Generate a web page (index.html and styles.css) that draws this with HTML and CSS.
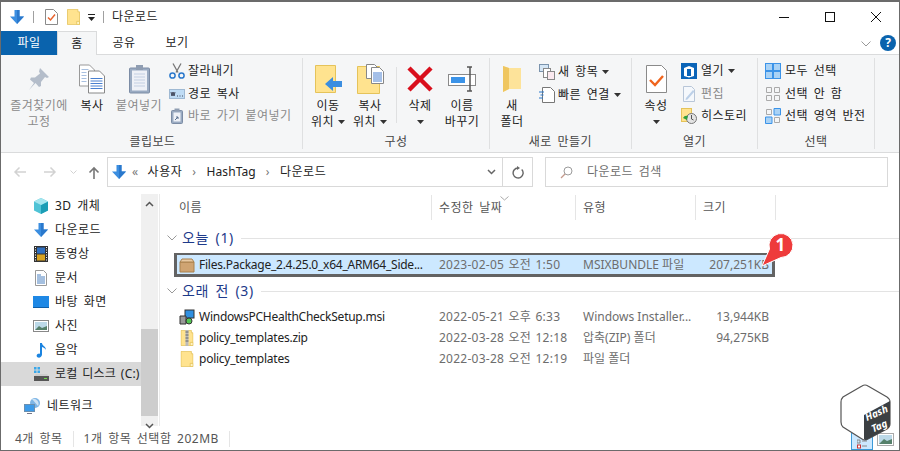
FILE: index.html
```html
<!DOCTYPE html>
<html lang="ko">
<head>
<meta charset="utf-8">
<title>다운로드</title>
<link rel="stylesheet" href="styles.css">
</head>
<body>
<svg class="defs" width="0" height="0">
  <symbol id="dl" viewBox="0 0 16 16"><path d="M5.500 1h5v6.500H15L8 15 1 7.500h4.500z" fill="#3b8ee0"/><path d="M8 1h2.500v6.500H15L8 15z" fill="#2a78cc"/></symbol>
  <symbol id="folder" viewBox="0 0 16 20"><path d="M.5.500h13v3h2v16H.5z" fill="#ffe38f" stroke="#e5c35a"/><path d="M12 15.500h3.500v4H12z" fill="#fff3c4" stroke="#e5c35a"/></symbol>
  <symbol id="caret" viewBox="0 0 7 4"><path d="M0 0h7L3.500 4z" fill="#333"/></symbol>
  <symbol id="chev" viewBox="0 0 10 6"><path d="M.5.500 5 5 9.500.5" fill="none" stroke="#999"/></symbol>
</svg>
<div class="window">

  <header class="titlebar">
    <svg class="qa-dl" width="16" height="16"><use href="#dl"/></svg>
    <i class="qa-sep"></i>
    <svg class="qa-props" width="13" height="16" viewBox="0 0 13 16"><path d="M.5.500h8l4 4v11H.5z" fill="#fff" stroke="#8a8a8a"/><path d="M3 8.500l2.500 2.500L10 5.500" fill="none" stroke="#e8622c" stroke-width="1.500"/></svg>
    <svg class="qa-folder" width="13" height="16"><use href="#folder"/></svg>
    <svg class="qa-more" width="7" height="7" viewBox="0 0 7 7"><path d="M0 0h7v1H0zM0 3h7L3.500 7z" fill="#222"/></svg>
    <i class="qa-sep qa-sep-2"></i>
    <span class="title">다운로드</span>
    <div class="winctl">
      <svg width="12" height="12" viewBox="0 0 12 12"><path d="M1 6.500h10" stroke="#111"/></svg>
      <svg width="12" height="12" viewBox="0 0 12 12"><rect x="1.500" y="1.500" width="9" height="9" fill="none" stroke="#111"/></svg>
      <svg width="12" height="12" viewBox="0 0 12 12"><path d="M1 1l10 10M11 1 1 11" stroke="#111"/></svg>
    </div>
  </header>

  <nav class="tabs">
    <span class="tab tab-file">파일</span>
    <span class="tab tab-on">홈</span>
    <span class="tab tab-share">공유</span>
    <span class="tab tab-view">보기</span>
    <svg class="collapse" width="10" height="6"><use href="#chev"/></svg>
    <span class="help">?</span>
  </nav>

  <section class="ribbon">
    <div class="group g-clip">
      <div class="tools">
        <div class="lg lg-pin off">
          <svg width="24" height="24" viewBox="0 0 24 24"><path d="M13 1l9 9-2 1-2-1-4 5 0 4-2 1-3.500-4L2 23l5-7-4-3.500 1-2h4l5-4-1-2z" fill="#b4bdca"/></svg>
          <span>즐겨찾기에<br>고정</span>
        </div>
        <div class="lg lg-copy">
          <svg width="26" height="29" viewBox="0 0 26 29"><path d="M.5.500h10l5 5v16H.5z" fill="#fff" stroke="#999"/><path d="M9.500 6.500h11l5 5v17h-16z" fill="#fff" stroke="#888"/><path d="M2.500 5h7M2.500 8h5M2.500 11h5M2.500 14h5M2.500 17h5" stroke="#a8c0e0"/><path d="M11.500 14h12M11.500 16.500h12M11.500 19h12M11.500 21.500h12M11.500 24h12" stroke="#4a80d0"/></svg>
          <span>복사</span>
        </div>
        <div class="lg lg-paste off">
          <svg width="21" height="29" viewBox="0 0 21 29"><rect x=".5" y="3.500" width="20" height="25" rx="1" fill="#9aabc2" stroke="#7c8ca5"/><rect x="3" y="6" width="15" height="20" fill="#eef1f7"/><path d="M5 9.500h11M5 12.500h11M5 15.500h11M5 18.500h11M5 21.500h11" stroke="#c3cfe2"/><rect x="7" y=".5" width="7" height="5" fill="#8f9db2"/></svg>
          <span>붙여넣기</span>
        </div>
        <div class="smalls">
          <div class="sm">
            <svg width="16" height="16" viewBox="0 0 16 16"><path d="M4 .5l5 9M12 .5l-5 9" stroke="#777" stroke-width="1.300"/><circle cx="3.500" cy="12.500" r="2.600" fill="none" stroke="#2a78cc" stroke-width="1.500"/><circle cx="12.500" cy="12.500" r="2.600" fill="none" stroke="#2a78cc" stroke-width="1.500"/></svg>
            <span>잘라내기</span>
          </div>
          <div class="sm">
            <svg width="16" height="16" viewBox="0 0 16 16"><rect x=".5" y="3.500" width="15" height="9" fill="#bfdcf5" stroke="#9fb9d3"/><path d="M2 6l1 4 1-4 1 4 1-4M8 10h1M10.500 10h1M13 10h1" stroke="#223" fill="none" stroke-width=".8"/></svg>
            <span>경로 복사</span>
          </div>
          <div class="sm off">
            <svg width="16" height="16" viewBox="0 0 16 16"><rect x="2.500" y="2.500" width="11" height="13" rx="1" fill="#9aabc2" stroke="#7c8ca5"/><rect x="4.500" y="4.500" width="7" height="9" fill="#eef1f7"/><rect x="5.500" y=".5" width="5" height="3" fill="#8f9db2"/><path d="M6 12l3-3m-2 0h2v2" fill="none" stroke="#5a7090"/></svg>
            <span>바로 가기 붙여넣기</span>
          </div>
        </div>
      </div>
      <div class="gname">클립보드</div>
    </div>

    <div class="group g-org">
      <div class="tools">
        <div class="lg lg-42">
          <svg width="27" height="28" viewBox="0 0 27 28"><path d="M.5.500h20v27H.5z" fill="#ffe38f" stroke="#e5c35a"/><path d="M10 19l8-7v4h9v6h-9v4z" fill="#3b8ee0"/></svg>
          <span>이동<br>위치<svg class="cr" width="7" height="4"><use href="#caret"/></svg></span>
        </div>
        <div class="lg lg-42">
          <svg width="27" height="30" viewBox="0 0 27 30"><path d="M.5 2.500h22v27H.5z" fill="#ffe38f" stroke="#e5c35a"/><path d="M9.500.5h8l4 4v10h-12z" fill="#fff" stroke="#888"/><path d="M14.500 3.500h8l4 4v12h-12z" fill="#fff" stroke="#888"/><path d="M16 9h9M16 11h9M16 13h9M16 15h9M16 17h9" stroke="#4a80d0"/></svg>
          <span>복사<br>위치<svg class="cr" width="7" height="4"><use href="#caret"/></svg></span>
        </div>
        <i class="vsep"></i>
        <div class="lg lg-del">
          <svg width="26" height="26" viewBox="0 0 26 26"><path d="M2 2l22 22M24 2 2 24" stroke="#d90f1c" stroke-width="4.500"/></svg>
          <span>삭제<br><svg class="cr solo" width="7" height="4"><use href="#caret"/></svg></span>
        </div>
        <div class="lg lg-ren">
          <svg width="28" height="26" viewBox="0 0 28 26"><rect x=".5" y="8.500" width="27" height="11" fill="#fff" stroke="#8a8a8a"/><rect x="3" y="11" width="14" height="6" fill="#3b93e8"/><path d="M19 1h3m2 0h-2v24m-3 0h3m2 0h-2" stroke="#555" stroke-width="1.500" fill="none"/></svg>
          <span>이름<br>바꾸기</span>
        </div>
      </div>
      <div class="gname">구성</div>
    </div>

    <div class="group g-new">
      <div class="tools">
        <div class="lg lg-newf">
          <svg width="20" height="28" viewBox="0 0 20 28"><path d="M1 1l6 2h12v21H7l-6 3z" fill="#fde39a"/><path d="M1 1l6 2v21l-6 3z" fill="#efc660"/></svg>
          <span>새<br>폴더</span>
        </div>
        <div class="smalls">
          <div class="sm sm-tight">
            <svg width="16" height="16" viewBox="0 0 16 16"><rect x=".5" y=".5" width="9" height="7" fill="#d5e6f5" stroke="#7a93ad"/><rect x="4.500" y="4.500" width="7" height="9" fill="#fff" stroke="#888"/><rect x="8.500" y="7.500" width="7" height="8" fill="#fbe9ef" stroke="#888"/></svg>
            <span>새 항목<svg class="cr" width="7" height="4"><use href="#caret"/></svg></span>
          </div>
          <div class="sm sm-tight">
            <svg width="16" height="16" viewBox="0 0 16 16"><path d="M3.500.5h8l4 4v11h-12z" fill="#fff" stroke="#777"/><path d="M0 5h5M1.500 8h3M0 11h4" stroke="#2a78cc" stroke-width="1.200"/></svg>
            <span>빠른 연결<svg class="cr" width="7" height="4"><use href="#caret"/></svg></span>
          </div>
        </div>
      </div>
      <div class="gname">새로 만들기</div>
    </div>

    <div class="group g-open">
      <div class="tools">
        <div class="lg lg-prop">
          <svg width="21" height="28" viewBox="0 0 21 28"><path d="M.5.500h15l5 5v22H.5z" fill="#fff" stroke="#8a8a8a"/><path d="M4 15l5 5 8-9" fill="none" stroke="#f0651e" stroke-width="2.400"/></svg>
          <span>속성<br><svg class="cr solo" width="7" height="4"><use href="#caret"/></svg></span>
        </div>
        <div class="smalls smalls-open">
          <div class="sm">
            <svg width="16" height="16" viewBox="0 0 16 16"><rect width="16" height="16" fill="#0a64b8"/><path d="M3 5l5-2 5 2v8l-5 1.500L3 13z" fill="#fff"/><path d="M6 6h4v7H6z" fill="#0a64b8"/></svg>
            <span>열기<svg class="cr" width="7" height="4"><use href="#caret"/></svg></span>
          </div>
          <div class="sm off">
            <svg width="16" height="16" viewBox="0 0 16 16"><path d="M2.500.5h8l3 3v12h-11z" fill="#f5f8fc" stroke="#b8c6d8"/><path d="M5 12l7-8 1.500 1.500-7 8-2 .5z" fill="#bcd0e8"/></svg>
            <span>편집</span>
          </div>
          <div class="sm">
            <svg width="16" height="16" viewBox="0 0 16 16"><rect x=".5" y=".5" width="10" height="13" fill="#ffe38f" stroke="#e5c35a"/><circle cx="10.500" cy="10.500" r="5" fill="#e4e4e4" stroke="#777"/><path d="M10.500 7v4l2 1" fill="none" stroke="#555"/><path d="M2 10a4 4 0 0 1 5-2l-1 4z" fill="#2f9e3d"/></svg>
            <span>히스토리</span>
          </div>
        </div>
      </div>
      <div class="gname">열기</div>
    </div>

    <div class="group g-sel">
      <div class="tools">
        <div class="smalls smalls-sel">
          <div class="sm">
            <svg width="16" height="16" viewBox="0 0 16 16"><rect x=".5" y=".5" width="15" height="15" fill="#a9d2f5" stroke="#3b93e8"/><path d="M8 0v16M0 8h16" stroke="#3b93e8" stroke-width="2"/></svg>
            <span>모두 선택</span>
          </div>
          <div class="sm">
            <svg width="16" height="16" viewBox="0 0 16 16"><path d="M1.500 1.500h5v5h-5zM9.500 1.500h5v5h-5zM1.500 9.500h5v5h-5zM9.500 9.500h5v5h-5z" fill="none" stroke="#aaa"/></svg>
            <span>선택 안 함</span>
          </div>
          <div class="sm">
            <svg width="16" height="16" viewBox="0 0 16 16"><path d="M1.500 1.500h5v5h-5zM9.500 9.500h5v5h-5z" fill="none" stroke="#aaa"/><path d="M9 .5h6.500V7H9zM.5 9H7v6.500H.5z" fill="#a9d2f5" stroke="#3b93e8"/></svg>
            <span>선택 영역 반전</span>
          </div>
        </div>
      </div>
      <div class="gname">선택</div>
    </div>
  </section>

  <div class="addrbar">
    <div class="navs">
      <svg width="14" height="12" viewBox="0 0 14 12"><path d="M13 6H2M6.500 1.500 2 6l4.500 4.500" fill="none" stroke="#d2d2d2" stroke-width="1.500"/></svg>
      <svg width="14" height="12" viewBox="0 0 14 12"><path d="M1 6h11M7.500 1.500 12 6l-4.500 4.500" fill="none" stroke="#d2d2d2" stroke-width="1.500"/></svg>
      <svg class="nav-dd" width="7" height="4" viewBox="0 0 7 4"><path d="M.5.500 3.500 3.500 6.500.5" fill="none" stroke="#d2d2d2"/></svg>
      <svg width="12" height="13" viewBox="0 0 12 13"><path d="M6 13V2M1.500 6.500 6 2l4.500 4.500" fill="none" stroke="#777" stroke-width="1.600"/></svg>
    </div>
    <div class="addr">
      <svg width="16" height="16"><use href="#dl"/></svg>
      <span class="crumb-more">«</span>
      <span>사용자</span><b class="crumb-sep">›</b>
      <span class="crumb-latin">HashTag</span><b class="crumb-sep">›</b>
      <span>다운로드</span>
      <div class="addr-end">
        <span class="addr-dd"><svg width="9" height="6" viewBox="0 0 9 6"><path d="M1 1l3.500 3.500L8 1" fill="none" stroke="#666" stroke-width="1.500"/></svg></span>
        <span class="addr-re"><svg width="12" height="13" viewBox="0 0 12 13"><path d="M9.700 3.500a5 5 0 1 1-3.700-1.500" fill="none" stroke="#666" stroke-width="1.400"/><path d="M5 0l3 2-3 2z" fill="#666"/></svg></span>
      </div>
    </div>
    <div class="search">
      <svg width="13" height="13" viewBox="0 0 13 13"><circle cx="8" cy="5" r="4" fill="none" stroke="#9b9b9b"/><path d="M5 8l-4 4" stroke="#c49a8c" stroke-width="1.200"/></svg>
      <span>다운로드 검색</span>
    </div>
  </div>

  <main class="main">
    <aside class="side">
      <ul class="tree">
        <li class="node">
          <svg width="16" height="16" viewBox="0 0 16 16"><path d="M8 0l7 3.500v9L8 16l-7-3.500v-9z" fill="#4fc3d6"/><path d="M8 7l7-3.500v9L8 16z" fill="#1c9db5"/><path d="M8 0l7 3.500L8 7 1 3.500z" fill="#a6e6ef"/></svg>
          <span>3D 개체</span>
        </li>
        <li class="node">
          <svg width="16" height="16"><use href="#dl"/></svg>
          <span>다운로드</span>
        </li>
        <li class="node">
          <svg width="16" height="16" viewBox="0 0 16 16"><rect x="1" width="14" height="16" fill="#333"/><rect x="4" y="1.500" width="8" height="6" fill="#2f6fc0"/><rect x="4" y="8.500" width="8" height="6" fill="#d9a320"/><path d="M2 1.500h1M2 4h1M2 6.500h1M2 9h1M2 11.500h1M2 14h1M13 1.500h1M13 4h1M13 6.500h1M13 9h1M13 11.500h1M13 14h1" stroke="#fff"/></svg>
          <span>동영상</span>
        </li>
        <li class="node">
          <svg width="16" height="16" viewBox="0 0 16 16"><path d="M2.500.5h8l3 3v12h-11z" fill="#fff" stroke="#999"/><path d="M4 5h4M4 7h8M4 9h8M4 11h8M4 13h8" stroke="#4a80c0"/></svg>
          <span>문서</span>
        </li>
        <li class="node">
          <svg width="16" height="16" viewBox="0 0 16 16"><rect y="2" width="16" height="11" fill="#1e88e5"/><path d="M0 13h16v1H0z" fill="#0f5ea8"/></svg>
          <span>바탕 화면</span>
        </li>
        <li class="node">
          <svg width="16" height="16" viewBox="0 0 16 16"><rect x=".5" y="2.500" width="15" height="11" fill="#fff" stroke="#888"/><rect x="2" y="4" width="12" height="8" fill="#bcd9e8"/><path d="M2 12l4-4 3 2 5-2v4z" fill="#55806a"/></svg>
          <span>사진</span>
        </li>
        <li class="node">
          <svg width="16" height="16" viewBox="0 0 16 16"><path d="M7 1h2c0 3 4 3 4 7-1-2-2-2-4-3v7.500C9 15 6.500 16 5 15.500S3 13 4.500 12 7 11.500 7 12z" fill="#1b84e0"/></svg>
          <span>음악</span>
        </li>
        <li class="node node-on">
          <svg width="16" height="16" viewBox="0 0 16 16"><rect x="1" y="1" width="2.500" height="2.500" fill="#39a7ea"/><rect x="4.500" y="1" width="2.500" height="2.500" fill="#39a7ea"/><rect x="1" y="4.500" width="2.500" height="2.500" fill="#39a7ea"/><rect x="4.500" y="4.500" width="2.500" height="2.500" fill="#39a7ea"/><rect x="1" y="10" width="15" height="5" fill="#555"/><path d="M1 10l2-2h11l2 2z" fill="#ccc"/><rect x="11" y="12" width="3" height="1" fill="#6fdc4a"/></svg>
          <span>로컬 디스크 (C:)</span>
        </li>
        <li class="node node-net">
          <svg width="17" height="16" viewBox="0 0 17 16"><circle cx="11" cy="5" r="5" fill="#7eb6e6"/><path d="M8 1a5 5 0 0 1 6 7z" fill="#cfe3f4"/><rect x=".5" y="6.500" width="10" height="7" fill="#3d9be9" stroke="#6a8fb0"/><path d="M3 15.500h5" stroke="#778"/></svg>
          <span>네트워크</span>
        </li>
      </ul>
      <div class="vscroll">
        <svg width="9" height="6" viewBox="0 0 9 6"><path d="M1 5l3.500-3.500L8 5" fill="none" stroke="#555" stroke-width="1.500"/></svg>
        <div class="vtrack"><div class="vthumb"></div></div>
        <svg width="9" height="6" viewBox="0 0 9 6"><path d="M1 1l3.500 3.500L8 1" fill="none" stroke="#555" stroke-width="1.500"/></svg>
      </div>
    </aside>

    <div class="files">
      <div class="cols">
        <span class="c-name col">이름</span>
        <span class="c-date col">수정한 날짜<svg class="sort" width="9" height="5" viewBox="0 0 9 5"><path d="M.5.500 4.500 4 8.500.5" fill="none" stroke="#aaa"/></svg></span>
        <span class="c-type col">유형</span>
        <span class="c-size col">크기</span>
      </div>

      <div class="ghead">
        <svg width="10" height="6"><use href="#chev"/></svg>
        <span class="gtitle">오늘 (1)</span><i class="gline"></i>
      </div>
      <div class="row row-sel">
        <span class="c-name cell">
          <svg width="16" height="16" viewBox="0 0 16 16"><path d="M1 5h14v10H1z" fill="#cfa472" stroke="#a9814f"/><path d="M1 5l2-3h10l2 3z" fill="#e8c9a2" stroke="#a9814f"/></svg>
          Files.Package_2.4.25.0_x64_ARM64_Side...
        </span>
        <span class="c-date dim">2023-02-05 오전 1:50</span>
        <span class="c-type dim">MSIXBUNDLE 파일</span>
        <span class="c-size dim">207,251KB</span>
      </div>

      <div class="ghead ghead-2">
        <svg width="10" height="6"><use href="#chev"/></svg>
        <span class="gtitle">오래 전 (3)</span><i class="gline"></i>
      </div>
      <div class="row">
        <span class="c-name cell">
          <svg width="16" height="16" viewBox="0 0 16 16"><rect x="6" y="1" width="9" height="8" fill="#2f8fe0" stroke="#333"/><path d="M1 7h6v8H1z" fill="#999" stroke="#333"/><circle cx="10" cy="12" r="3" fill="#53c653" stroke="#333"/></svg>
          WindowsPCHealthCheckSetup.msi
        </span>
        <span class="c-date dim">2022-05-21 오후 6:33</span>
        <span class="c-type dim">Windows Installer...</span>
        <span class="c-size dim">13,944KB</span>
      </div>
      <div class="row">
        <span class="c-name cell">
          <svg width="16" height="16" viewBox="0 0 13 16"><use href="#folder"/><path d="M5 0h3v16H5z" fill="#bbb"/><path d="M5 2h3M5 5h3M5 8h3M5 11h3" stroke="#666"/></svg>
          policy_templates.zip
        </span>
        <span class="c-date dim">2022-03-28 오전 12:18</span>
        <span class="c-type dim">압축(ZIP) 폴더</span>
        <span class="c-size dim">94,275KB</span>
      </div>
      <div class="row">
        <span class="c-name cell">
          <svg width="16" height="16" viewBox="0 0 13 16"><use href="#folder"/></svg>
          policy_templates
        </span>
        <span class="c-date dim">2022-03-28 오전 12:19</span>
        <span class="c-type dim">파일 폴더</span>
        <span class="c-size dim"></span>
      </div>

      <svg class="callout" width="36" height="38" viewBox="0 0 36 38">
        <path d="M4 35 11.500 18A12 12 0 1 1 23 26.500z" fill="#ee3b3b" stroke="#fff" stroke-width="1"/>
        <text x="22.500" y="20" class="callout-n">1</text>
      </svg>
    </div>
  </main>

  <footer class="status">
    <span class="st-a">4개 항목</span>
    <span class="st-b">1개 항목 선택함 202MB</span>
    <i class="st-end"></i>
    <span class="view-det"><svg width="10" height="12" viewBox="0 0 10 12"><path d="M0 3h3v3H0zM5 4h5M5 9h5" stroke="#888" fill="none"/><rect x=".5" y="8" width="3" height="3" fill="#fff" stroke="#c33"/></svg></span>
    <span class="view-lg"><svg width="13" height="9" viewBox="0 0 13 9"><rect width="13" height="9" fill="#bcd9e8"/><path d="M0 9l5-5 3 2 5-2v5z" fill="#55806a"/></svg></span>
    <svg class="mark" width="52" height="58" viewBox="0 0 52 58">
      <path d="M22 2Q25 0 28 2L47 13Q50 15 50 18V40Q50 43 47 45L28 55Q25 57 22 55L3 43Q1 41 1 38V18Q1 15 3 13z" fill="#fff" stroke="#555" stroke-width="1.200"/>
      <path d="M50 17V40Q50 43 47 45L28 55Q25 57 24 55V31z" fill="#3b3f42"/>
      <g class="mark-t" transform="translate(27 37) rotate(-24)"><text x="0" y="0">Hash</text><text x="1" y="13">Tag</text></g>
    </svg>
  </footer>
</div>
</body>
</html>
```

FILE: styles.css
```css
* { box-sizing: border-box; }
html, body { margin: 0; padding: 0; background: #fff; }
body { font: 12px/16px "Noto Sans", "Noto Sans CJK KR", sans-serif; color: #222; letter-spacing: .5px; word-spacing: 2px; }
.defs { position: absolute; }
svg { display: block; flex: none; }
i { display: block; font-style: normal; }

.window { width: 900px; height: 451px; border: 1px solid #6b6b6b; border-top-width: 2px; display: flex; flex-direction: column; overflow: hidden; background: #fff; }

.titlebar { height: 29px; flex: none; display: flex; align-items: center; padding-left: 8px; }
.qa-sep { width: 1px; height: 12px; background: #a0a0a0; margin: 0 11px 0 8px; }
.qa-sep-2 { margin: 0 8px 0 8px; }
.qa-folder { margin-left: 9px; }
.qa-more { margin-left: 8px; margin-top: 2px; }
.winctl { margin-left: auto; display: flex; gap: 34px; padding-right: 17px; }

.tabs { height: 24px; flex: none; display: flex; align-items: stretch; border-bottom: 1px solid #dadbdc; position: relative; }
.tab { display: flex; align-items: center; justify-content: center; }
.tab-file { width: 56px; background: #0a63ad; color: #fff; margin-bottom: -1px; }
.tab-on { width: 40px; background: #f5f6f7; border: 1px solid #dadbdc; border-bottom: 0; margin-bottom: -1px; }
.tab-share { width: 54px; }
.tab-view { width: 52px; }
.collapse { position: absolute; left: 860px; top: 10px; }
.help { position: absolute; left: 879px; top: 4px; width: 16px; height: 16px; border-radius: 50%; background: #0a63ad; color: #fff; font-weight: 700; font-size: 12px; line-height: 16px; text-align: center; letter-spacing: 0; }

.ribbon { height: 98px; flex: none; display: flex; background: #f5f6f7; border-bottom: 1px solid #dadbdc; padding-top: 3px; padding-bottom: 3px; }
.group { display: flex; flex-direction: column; border-right: 1px solid #dfe0e1; }
.g-clip { width: 302px; padding-left: 7px; }
.g-org { width: 187px; }
.g-new { width: 142px; }
.g-open { width: 126px; }
.g-sel { width: 117px; }
.tools { flex: 1; display: flex; align-items: flex-start; min-height: 0; }
.gname { height: 20px; flex: none; text-align: center; line-height: 26px; color: #444; }
.g-clip .gname { padding-right: 5px; }

.lg { display: flex; flex-direction: column; align-items: center; text-align: center; padding-top: 5px; }
.lg > svg { height: 32px; margin-bottom: 3px; }
.lg span { line-height: 16px; display: block; }
.lg-pin { width: 62px; }
.lg-copy { width: 44px; }
.lg-paste { width: 50px; }
.lg-42 { width: 42px; }
.lg-del { width: 44px; margin-left: 1px; }
.lg-ren { width: 44px; margin-left: -2px; }
.lg-newf { width: 44px; }
.lg-prop { width: 48px; }
.off, .off span { color: #8a8a8a; }
.vsep { width: 1px; height: 56px; background: #dfe0e1; margin: 9px 0 0 5px; }
.g-org .tools { padding-left: 4px; }
.cr { display: inline-block; margin-left: 4px; vertical-align: 2px; }
.cr.solo { margin-left: 0; }

.smalls { display: flex; flex-direction: column; padding-left: 5px; padding-top: 2px; }
.smalls-open { padding-left: 1px; }
.smalls-open .sm, .smalls-sel .sm { gap: 4px; }
.smalls-sel { padding-left: 7px; }
.sm { height: 22.500px; display: flex; align-items: center; gap: 3px; white-space: nowrap; }
.sm-tight { height: 23px; }

.addrbar { height: 41px; flex: none; display: flex; align-items: flex-start; padding-top: 4px; }
.navs { width: 106px; height: 30px; display: flex; align-items: center; padding-left: 12px; gap: 16px; }
.nav-dd { margin: 0 -5px 0 -3px; }
.addr { width: 426px; height: 30px; border: 1px solid #d9d9d9; display: flex; align-items: center; padding-left: 3px; }
.crumb-more { margin: 0 9px 0 5px; color: #777; }
.crumb-sep { font-weight: 400; margin: 0 10px; color: #777; }
.crumb-latin { letter-spacing: .1px; }
.addr-end { margin-left: auto; display: flex; height: 100%; }
.addr-dd, .addr-re { display: flex; align-items: center; justify-content: center; }
.addr-dd { width: 22px; }
.addr-re { border-left: 1px solid #d9d9d9; width: 30px; }
.search { width: 343px; height: 30px; margin-left: 12px; border: 1px solid #d9d9d9; display: flex; align-items: center; padding-left: 14px; gap: 14px; color: #6d6d6d; }

.main { flex: 1; display: flex; min-height: 0; position: relative; }
.side { width: 159px; flex: none; display: flex; border-right: 1px solid #eaeaea; }
.tree { list-style: none; margin: 0; padding: 0; width: 140px; flex: none; }
.node { height: 24px; display: flex; align-items: center; gap: 6px; padding-left: 32px; white-space: nowrap; }
.node-on { background: #d9d9d9; }
.node-on span { letter-spacing: .2px; word-spacing: 1.500px; }
.node-net { margin-top: 8px; padding-left: 23px; }
.vscroll { width: 17px; flex: none; background: #f0f0f0; display: flex; flex-direction: column; align-items: center; padding: 7px 0; }
.vtrack { flex: 1; width: 100%; padding-top: 122px; padding-bottom: 7px; }
.vthumb { height: 87px; background: #cdcdcd; }

.files { flex: 1; min-width: 0; position: relative; }
.cols { display: flex; height: 25px; align-items: center; margin-top: 1px; color: #555; }
.col { height: 25px; display: flex; align-items: center; border-right: 1px solid #e5e5e5; position: relative; }
.c-name { width: 272px; padding-left: 19px; }
.c-date { width: 144px; padding-left: 7px; }
.c-type { width: 120px; padding-left: 7px; }
.c-size { width: 80px; padding-left: 7px; }
.sort { position: absolute; left: 68px; top: 1px; }

.ghead { display: flex; align-items: center; height: 22px; margin-top: 7px; padding-left: 7px; }
.ghead-2 { margin-top: 3px; margin-bottom: 4px; }
.gtitle { font-size: 14px; color: #1e3a8a; margin-left: 5px; white-space: nowrap; letter-spacing: .7px; word-spacing: 2px; }
.gline { flex: 1; height: 1px; background: #e3e3e3; margin: 0 0 0 7px; }

.row { display: flex; align-items: center; height: 21px; margin-left: 14px; width: 601px; letter-spacing: 0; word-spacing: 0; }
.row .c-name { width: 258px; padding-left: 5px; }
.row .c-date { width: 144px; padding-left: 7px; letter-spacing: .25px; word-spacing: 1px; }
.row .c-type { width: 120px; padding-left: 7px; }
.row .c-size { width: 73px; padding: 0; text-align: right; }
.cell { display: flex; align-items: center; gap: 4px; white-space: nowrap; color: #222; letter-spacing: -.25px; }
.dim { color: #6d6d6d; white-space: nowrap; }
.row-sel { height: 24px; background: #cce8ff; border: 3px solid #636363; border-width: 2px 3px 3px 3px; margin-top: 4px; }
.row-sel .c-name { padding-left: 2px; width: 255px; }
.callout { position: absolute; left: 598px; top: 37px; }
.callout-n { font: 700 17px "Noto Sans", sans-serif; fill: #fff; text-anchor: middle; }

.status { height: 24px; flex: none; display: flex; align-items: center; position: relative; color: #555; padding-top: 1px; }
.st-a { margin-left: 14px; padding-right: 10px; border-right: 1px solid #e5e5e5; }
.st-b { margin-left: 10px; padding-right: 10px; border-right: 1px solid #e5e5e5; }
.view-det { position: absolute; left: 850px; top: 4px; width: 22px; height: 20px; background: #cce8ff; border: 1px solid #3b9ad9; display: flex; justify-content: center; align-items: flex-end; }
.view-lg { position: absolute; left: 876px; top: 7px; border: 1px solid #aaa; padding: 1px; }
.mark { position: absolute; left: 839px; top: -42px; }
.mark-t text { font: italic 700 10px "Noto Sans", sans-serif; fill: #fff; letter-spacing: 0; }
```
